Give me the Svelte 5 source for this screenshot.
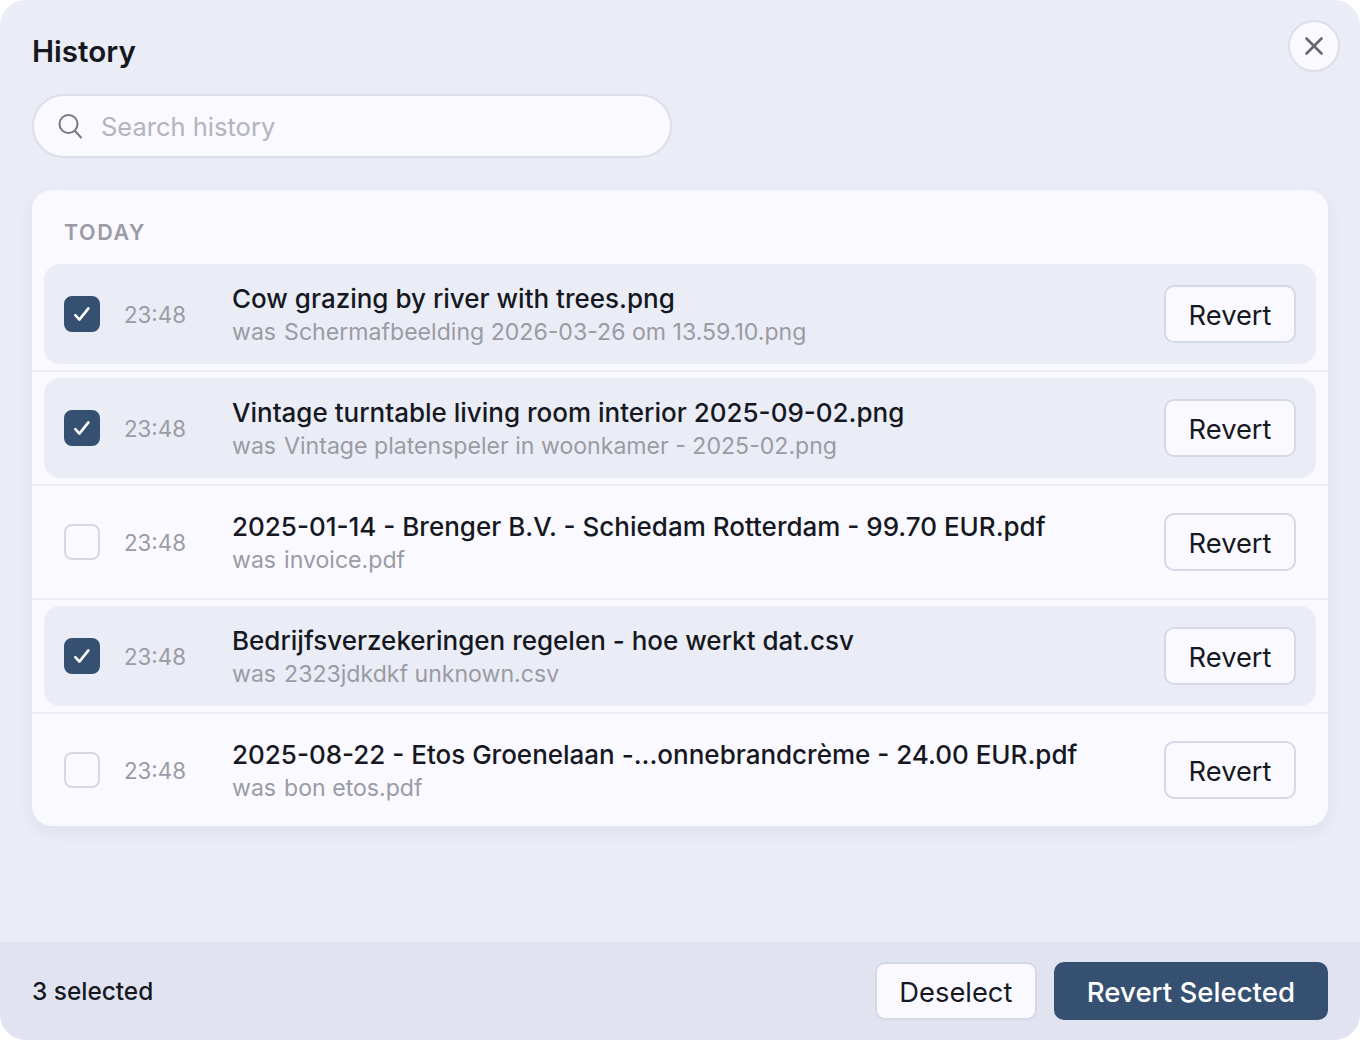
<script lang="ts">
  interface Entry {
    id: number;
    name: string;
    was: string;
    time: string;
    checked: boolean;
  }

  let entries: Entry[] = $state([
    { id: 1, name: 'Cow grazing by river with trees.png', was: 'Schermafbeelding 2026-03-26 om 13.59.10.png', time: '23:48', checked: true },
    { id: 2, name: 'Vintage turntable living room interior 2025-09-02.png', was: 'Vintage platenspeler in woonkamer - 2025-02.png', time: '23:48', checked: true },
    { id: 3, name: '2025-01-14 - Brenger B.V. - Schiedam Rotterdam - 99.70 EUR.pdf', was: 'invoice.pdf', time: '23:48', checked: false },
    { id: 4, name: 'Bedrijfsverzekeringen regelen - hoe werkt dat.csv', was: '2323jdkdkf unknown.csv', time: '23:48', checked: true },
    { id: 5, name: '2025-08-22 - Etos Groenelaan -...onnebrandcrème - 24.00 EUR.pdf', was: 'bon etos.pdf', time: '23:48', checked: false }
  ]);

  let selected = $derived(entries.filter((e) => e.checked).length);
</script>

<div class="modal">
  <div class="body">
    <header>
      <h1>History</h1>
      <button class="close" aria-label="Close">
        <svg width="24" height="24" viewBox="0 0 24 24" fill="none" stroke="#66666e" stroke-width="2.6" stroke-linecap="round">
          <path d="M4.5 4.5l15 15M19.5 4.5l-15 15" />
        </svg>
      </button>
    </header>

    <div class="search">
      <svg width="28" height="28" viewBox="0 0 28 28" fill="none" stroke="#77777f" stroke-width="2" stroke-linecap="round">
        <circle cx="12.5" cy="12" r="9" />
        <path d="M19 19l6 6.5" />
      </svg>
      <input type="text" placeholder="Search history" />
    </div>

    <section class="card">
      <h2>TODAY</h2>
      {#each entries as entry, i (entry.id)}
        {#if i > 0}
          <div class="divider"></div>
        {/if}
        <div class="row" class:on={entry.checked}>
          <button class="check" class:on={entry.checked} aria-label="Select" onclick={() => (entry.checked = !entry.checked)}>
            {#if entry.checked}
              <svg width="22" height="22" viewBox="0 0 22 22" fill="none" stroke="#fff" stroke-width="2.6" stroke-linecap="round" stroke-linejoin="round">
                <path d="M4.3 12.2l4.1 4.4 9-11.2" />
              </svg>
            {/if}
          </button>
          <span class="time">{entry.time}</span>
          <div class="names">
            <div class="name">{entry.name}</div>
            <div class="was"><span class="was-label">was</span>{entry.was}</div>
          </div>
          <button class="btn">Revert</button>
        </div>
      {/each}
    </section>
  </div>

  <footer>
    <span class="count">{selected} selected</span>
    <div class="actions">
      <button class="btn">Deselect</button>
      <button class="btn primary">Revert Selected</button>
    </div>
  </footer>
</div>

<style>
  :global(body) {
    margin: 0;
    background: #fff;
  }

  .modal {
    width: 1360px;
    height: 1040px;
    display: flex;
    flex-direction: column;
    background: #eaedf6;
    border-radius: 26px;
    overflow: hidden;
    font-family: Inter, "Liberation Sans", sans-serif;
    color: #16181f;
  }

  .body {
    flex: 1;
    padding: 20px 32px 0;
  }

  header {
    display: flex;
    justify-content: space-between;
    align-items: flex-start;
    height: 74px;
    margin-right: -12px;
  }

  h1 {
    margin: 12px 0 0;
    font-size: 29.6px;
    line-height: 38px;
    font-weight: 600;
  }

  .close {
    width: 52px;
    height: 52px;
    padding: 0;
    display: flex;
    align-items: center;
    justify-content: center;
    border: 2px solid #dcdfea;
    border-radius: 50%;
    background: #f9f9ff;
  }

  .search {
    width: 640px;
    height: 64px;
    box-sizing: border-box;
    display: flex;
    align-items: center;
    gap: 17px;
    padding: 0 22px;
    background: #f9f9ff;
    border: 2px solid #dcdfea;
    border-radius: 32px;
  }

  .search input {
    flex: 1;
    min-width: 0;
    border: 0;
    outline: 0;
    padding: 0;
    background: transparent;
    font: 400 25.5px Inter, "Liberation Sans", sans-serif;
  }

  .search input::placeholder {
    color: #b3b4bc;
    opacity: 1;
  }

  .card {
    margin-top: 32px;
    padding: 0 12px 6px;
    background: #f9f9ff;
    border-radius: 20px;
    box-shadow: 0 6px 16px rgba(60, 70, 120, 0.07);
  }

  h2 {
    margin: 0;
    height: 74px;
    padding: 28px 0 0 20px;
    box-sizing: border-box;
    font-size: 21.5px;
    line-height: 28px;
    font-weight: 600;
    letter-spacing: 1.6px;
    color: #9a9ba3;
  }

  .divider {
    height: 2px;
    margin: 6px -12px;
    background: #eaedf6;
  }

  .row {
    height: 100px;
    display: flex;
    align-items: center;
    padding: 0 20px;
    border-radius: 16px;
  }

  .row.on {
    background: #eaedf6;
  }

  .check {
    width: 36px;
    height: 36px;
    flex: none;
    padding: 0;
    display: flex;
    align-items: center;
    justify-content: center;
    box-sizing: border-box;
    border: 2px solid #d5d8e3;
    border-radius: 8px;
    background: #f9f9ff;
  }

  .check.on {
    background: #355071;
    border-color: #355071;
  }

  .time {
    width: 108px;
    flex: none;
    margin-left: 24px;
    font-size: 22.3px;
    color: #9a9ba3;
  }

  .names {
    flex: 1;
    min-width: 0;
    padding-top: 2px;
  }

  .name {
    font-size: 26px;
    line-height: 34px;
    font-weight: 500;
    white-space: nowrap;
  }

  .was {
    font-size: 23.1px;
    line-height: 32px;
    color: #9a9ba3;
    white-space: nowrap;
  }

  .was-label {
    margin-right: 8px;
  }

  .btn {
    height: 58px;
    padding: 2px 22.5px 0;
    flex: none;
    box-sizing: border-box;
    font: 400 27.3px Inter, "Liberation Sans", sans-serif;
    color: #16181f;
    background: #f9f9ff;
    border: 2px solid #d5d9e6;
    border-radius: 10px;
  }

  footer {
    height: 98px;
    flex: none;
    box-sizing: border-box;
    padding: 0 32px;
    display: flex;
    align-items: center;
    justify-content: space-between;
    background: #e1e4f0;
  }

  .count {
    font-size: 24.4px;
    font-weight: 500;
  }

  .actions {
    display: flex;
    gap: 17px;
  }

  .btn.primary {
    padding: 2px 31px 0;
    font-size: 27.6px;
    font-weight: 500;
    color: #fff;
    background: #355071;
    border-color: #355071;
  }
</style>
